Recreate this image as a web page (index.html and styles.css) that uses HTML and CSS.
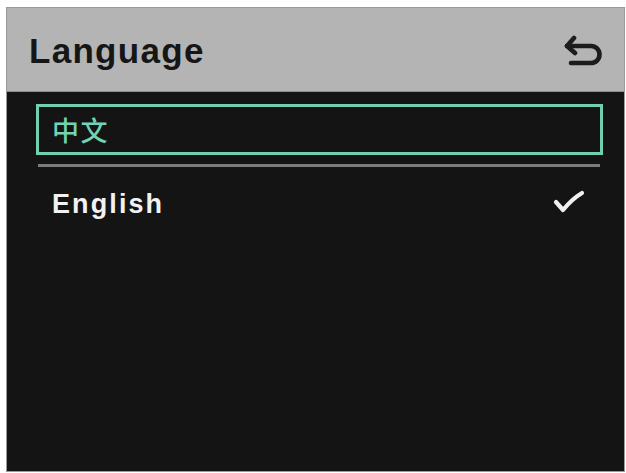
FILE: index.html
```html
<!DOCTYPE html>
<html lang="en">
<head>
<meta charset="utf-8">
<title>Language</title>
<link rel="stylesheet" href="styles.css">
</head>
<body>
<div class="screen">
  <header class="title-bar">
    <h1 class="title">Language</h1>
    <svg class="back-icon" width="40" height="36" viewBox="0 0 40 36" aria-hidden="true">
      <path d="M3 14 H27 A8.5 8.5 0 0 1 27 31 H7" fill="none" stroke="#1c1c1c" stroke-width="4.6" stroke-linecap="round" stroke-linejoin="round"/>
      <path d="M10 6 L3 14 L11 21" fill="none" stroke="#1c1c1c" stroke-width="4.6" stroke-linecap="round" stroke-linejoin="round"/>
    </svg>
  </header>
  <ul class="lang-list">
    <li class="lang-item is-focused">中文</li>
    <li class="lang-item is-selected">
      <span>English</span>
      <svg class="check-icon" width="40" height="30" viewBox="0 0 40 30" aria-hidden="true">
        <path d="M6 15 L13 23 Q22 12 32 6" fill="none" stroke="#f0f0f0" stroke-width="4.2" stroke-linecap="round" stroke-linejoin="round"/>
      </svg>
    </li>
  </ul>
</div>
</body>
</html>
```
FILE: styles.css
```css
html, body {
  margin: 0;
  padding: 0;
  background: #ffffff;
}

body {
  width: 626px;
  height: 473px;
  overflow: hidden;
  font-family: "Liberation Sans", Arial, sans-serif;
}

.screen {
  margin: 8px 2px 0 7px;
  width: 617px;
  height: 463px;
  background: #141414;
  box-shadow: 0 0 0 1px #9a9a9a;
  display: flex;
  flex-direction: column;
}

.title-bar {
  height: 84px;
  background: #b4b4b4;
  display: flex;
  align-items: center;
  justify-content: space-between;
  padding: 0 20px 0 22px;
  box-sizing: border-box;
  border-bottom: 1px solid #8c8c8c;
}

.title {
  margin: 0;
  margin-top: 3px;
  font-size: 35px;
  font-weight: bold;
  letter-spacing: 1.3px;
  color: #161616;
}

.back-icon {
  display: block;
}

.lang-list {
  list-style: none;
  margin: 0;
  padding: 0;
}

.lang-item {
  display: flex;
  align-items: center;
  box-sizing: border-box;
}

.is-focused {
  margin: 12px 21px 0 29px;
  height: 51px;
  border: 3px solid #70d0b0;
  padding-left: 13px;
  color: #72d2b2;
  font-family: "Noto Sans CJK SC", "Noto Sans", sans-serif;
  font-size: 27px;
  font-weight: 500;
  letter-spacing: 1.5px;
}

.is-selected {
  position: relative;
  margin-top: 9px;
  height: 72px;
  padding: 9px 34px 0 45px;
  justify-content: space-between;
  color: #f2f2f2;
  font-size: 27px;
  font-weight: bold;
  letter-spacing: 2.1px;
}

.is-selected::before {
  content: "";
  position: absolute;
  top: 0;
  left: 31px;
  right: 24px;
  height: 3px;
  background: #7c7c7c;
}

.check-icon {
  display: block;
  margin-top: -6px;
}
```
